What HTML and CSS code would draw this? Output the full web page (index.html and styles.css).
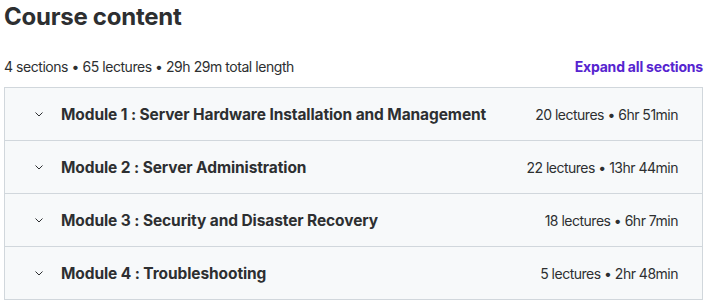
FILE: index.html
```html
<!DOCTYPE html>
<html lang="en">
<head>
  <meta charset="UTF-8">
  <meta name="viewport" content="width=device-width, initial-scale=1">
  <title>Course content</title>
  <link rel="stylesheet" href="styles.css">
</head>
<body>
  <div class="curriculum">
    <h2 class="title">Course content</h2>
    <div class="summary">
      <span>4 sections • 65 lectures • 29h 29m total length</span>
      <button class="expand">Expand all sections</button>
    </div>
    <div class="sections">
      <div class="section">
        <span class="chevron"><svg width="12" height="12" viewBox="0 0 12 12"><path d="M2.5 4.5 6 8l3.5-3.5" fill="none" stroke="#2d2f31" stroke-width="1"/></svg></span>
        <span class="name">Module 1 : Server Hardware Installation and Management</span>
        <span class="meta">20 lectures • 6hr 51min</span>
      </div>
      <div class="section">
        <span class="chevron"><svg width="12" height="12" viewBox="0 0 12 12"><path d="M2.5 4.5 6 8l3.5-3.5" fill="none" stroke="#2d2f31" stroke-width="1"/></svg></span>
        <span class="name">Module 2 : Server Administration</span>
        <span class="meta">22 lectures • 13hr 44min</span>
      </div>
      <div class="section">
        <span class="chevron"><svg width="12" height="12" viewBox="0 0 12 12"><path d="M2.5 4.5 6 8l3.5-3.5" fill="none" stroke="#2d2f31" stroke-width="1"/></svg></span>
        <span class="name">Module 3 : Security and Disaster Recovery</span>
        <span class="meta">18 lectures • 6hr 7min</span>
      </div>
      <div class="section">
        <span class="chevron"><svg width="12" height="12" viewBox="0 0 12 12"><path d="M2.5 4.5 6 8l3.5-3.5" fill="none" stroke="#2d2f31" stroke-width="1"/></svg></span>
        <span class="name">Module 4 : Troubleshooting</span>
        <span class="meta">5 lectures • 2hr 48min</span>
      </div>
    </div>
  </div>
</body>
</html>
```
FILE: styles.css
```css
body {
  margin: 0;
  background: #fff;
  color: #2d2f31;
  font-family: Inter, 'Noto Sans', sans-serif;
}
.curriculum {
  padding: 0 4px;
}
.title {
  margin: 0;
  padding-top: 2px;
  font-size: 24px;
  font-weight: 700;
  letter-spacing: -0.25px;
  line-height: 30px;
}
.summary {
  display: flex;
  justify-content: space-between;
  align-items: center;
  margin-top: 22px;
  height: 24px;
  font-size: 14px;
  letter-spacing: -0.45px;
}
.expand {
  border: none;
  background: none;
  padding: 0;
  font-family: inherit;
  font-size: 14px;
  font-weight: 700;
  letter-spacing: -0.2px;
  color: #5624d0;
}
.sections {
  margin-top: 9px;
  border: 1px solid #d1d7dc;
  border-bottom: none;
}
.section {
  display: flex;
  align-items: center;
  height: 52px;
  padding: 0 24px 0 28px;
  background: #f7f9fa;
  border-bottom: 1px solid #d1d7dc;
}
.chevron {
  display: flex;
  width: 12px;
  margin-right: 16px;
}
.name {
  flex: 1;
  font-size: 15.5px;
  font-weight: 700;
  letter-spacing: -0.1px;
}
.meta {
  font-size: 14px;
  letter-spacing: -0.5px;
}
```
